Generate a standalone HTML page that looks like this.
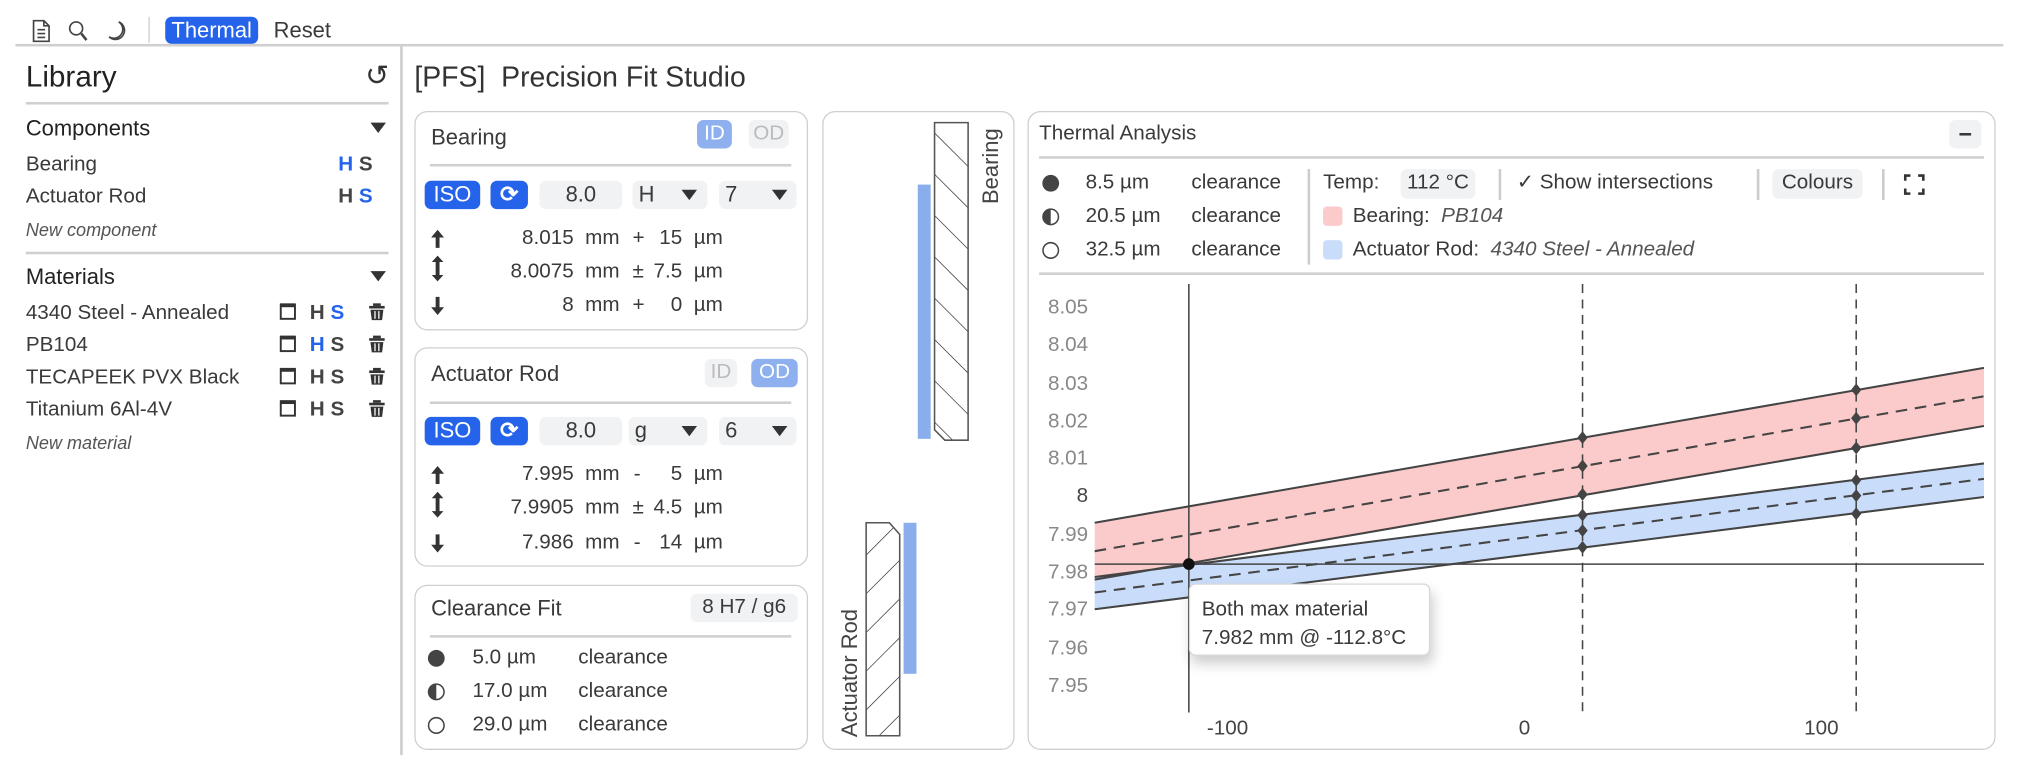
<!DOCTYPE html>
<html><head><meta charset="utf-8">
<style>
html,body{margin:0;padding:0;background:#fff;overflow:hidden;width:2024px;height:773px}
#r{position:absolute;left:0;top:0;width:1568px;height:599px;transform:scale(1.29082);transform-origin:0 0;font-family:"Liberation Sans",sans-serif;color:#3a3a3a;font-size:16px}
.a{position:absolute;white-space:nowrap;line-height:1}
.hr{position:absolute;height:2px;background:#d0d0d0}
.card{position:absolute;border:1.5px solid #cfcfcf;border-radius:10px;box-sizing:border-box}
.btn{position:absolute;border-radius:5px;background:#f1f2f4;text-align:center;line-height:22px;height:22px}
.blue{background:#2563eb;color:#fff}
.lb{background:#8fb0ee;color:#fff}
.b{font-weight:bold;color:#444}
.bb{font-weight:bold;color:#2563eb}
.r{text-align:right}
.it{font-style:italic;color:#555}
.tri{position:absolute;width:0;height:0;border-left:6px solid transparent;border-right:6px solid transparent;border-top:8px solid #333}
</style></head><body><div id="r">

<!-- toolbar -->
<svg class="a" style="left:24px;top:14px" width="80" height="20" viewBox="0 0 80 20" fill="none" stroke="#444" stroke-width="1.3">
<path d="M2 2h8l4 4v12H2z M10 2v4h4 M5 9h6 M5 12h6 M5 15h6"/>
<circle cx="35" cy="8" r="5"/><path d="M39 12l4 5" stroke-width="2"/>
<path d="M68 3a7 7 0 0 1-3 13.5a7 7 0 0 1-4.5-2a6 6 0 0 0 7.5-11.5z"/>
</svg>
<div class="a" style="left:115px;top:13px;width:1px;height:20px;background:#ccc"></div>
<div class="a blue" style="left:128px;top:13px;width:72px;height:21px;border-radius:5px;text-align:center;line-height:21px;font-size:17px">Thermal</div>
<div class="a" style="left:212px;top:15px;font-size:17px">Reset</div>
<div class="hr" style="left:12px;top:34px;width:1540px;height:1.5px"></div>
<div class="a" style="left:310px;top:36px;width:1.5px;height:549px;background:#ccc"></div>

<!-- sidebar -->
<div class="a" style="left:20px;top:48px;font-size:23px;color:#222">Library</div>
<div class="a" style="left:283px;top:48px;font-size:22px;color:#333">↺</div>
<div class="hr" style="left:20px;top:79px;width:281px"></div>
<div class="a" style="left:20px;top:91px;font-size:17px;color:#222">Components</div>
<div class="tri" style="left:287px;top:95px"></div>
<div class="a" style="left:20px;top:120px">Bearing</div>
<div class="a" style="left:262px;top:120px"><span class="bb">H</span> <span class="b">S</span></div>
<div class="a" style="left:20px;top:145px">Actuator Rod</div>
<div class="a" style="left:262px;top:145px"><span class="b">H</span> <span class="bb">S</span></div>
<div class="a it" style="left:20px;top:171px;font-size:14px">New component</div>
<div class="hr" style="left:20px;top:195px;width:281px"></div>
<div class="a" style="left:20px;top:206px;font-size:17px;color:#222">Materials</div>
<div class="tri" style="left:287px;top:210px"></div>

<div class="a" style="left:20px;top:235px">4340 Steel - Annealed</div>
<div class="a" style="left:20px;top:260px">PB104</div>
<div class="a" style="left:20px;top:285px">TECAPEEK PVX Black</div>
<div class="a" style="left:20px;top:310px">Titanium 6Al-4V</div>
<div class="a it" style="left:20px;top:336px;font-size:14px">New material</div>
<svg class="a" style="left:214px;top:232px" width="90" height="100" viewBox="0 0 90 100">
<g fill="none" stroke="#333" stroke-width="1.5">
<rect x="3.5" y="4" width="11" height="11"/><rect x="3.5" y="29" width="11" height="11"/><rect x="3.5" y="54" width="11" height="11"/><rect x="3.5" y="79" width="11" height="11"/></g>
<g fill="#333"><rect x="3" y="3" width="12" height="3"/><rect x="3" y="28" width="12" height="3"/><rect x="3" y="53" width="12" height="3"/><rect x="3" y="78" width="12" height="3"/>
<g id="t"><rect x="72" y="5" width="12" height="2"/><rect x="75" y="3" width="6" height="2"/><path d="M73 8h10l-1 8h-8z"/></g>
<use href="#t" y="25"/><use href="#t" y="50"/><use href="#t" y="75"/></g>
<g fill="#fff"><rect x="76" y="9" width="1" height="6"/><rect x="79" y="9" width="1" height="6"/><rect x="76" y="34" width="1" height="6"/><rect x="79" y="34" width="1" height="6"/><rect x="76" y="59" width="1" height="6"/><rect x="79" y="59" width="1" height="6"/><rect x="76" y="84" width="1" height="6"/><rect x="79" y="84" width="1" height="6"/></g>
</svg>
<div class="a" style="left:240px;top:235px"><span class="b">H</span> <span class="bb">S</span></div>
<div class="a" style="left:240px;top:260px"><span class="bb">H</span> <span class="b">S</span></div>
<div class="a" style="left:240px;top:285px"><span class="b">H</span> <span class="b">S</span></div>
<div class="a" style="left:240px;top:310px"><span class="b">H</span> <span class="b">S</span></div>

<!-- title -->
<div class="a" style="left:321px;top:49px;font-size:22px;color:#333">[PFS]&nbsp; Precision Fit Studio</div>

<!-- arrow icons -->
<svg class="a" style="left:330px;top:170px" width="20" height="270" viewBox="0 0 20 270" fill="#333">
<g id="up"><path d="M9 8l5 6h-3.5v8h-3v-8H4z"/></g>
<g id="ud"><path d="M9 28l4.5 5h-3v10h3L9 48l-4.5-5h3V33h-3z"/></g>
<g id="dn"><path d="M9 74l5-6h-3.5v-8h-3v8H4z"/></g>
<use href="#up" y="183"/><use href="#ud" y="183"/><use href="#dn" y="184"/>
</svg>

<!-- Bearing card -->
<div class="card" style="left:321px;top:86px;width:305px;height:170px"></div>
<div class="a" style="left:334px;top:98px;font-size:17px">Bearing</div>
<div class="btn lb" style="left:540px;top:93px;width:27px">ID</div>
<div class="btn" style="left:580px;top:93px;width:31px;color:#bbb">OD</div>
<div class="hr" style="left:333px;top:127px;width:280px"></div>
<div class="btn blue" style="left:329px;top:140px;width:43px;font-size:17px">ISO</div>
<div class="btn blue" style="left:380px;top:140px;width:29px;font-size:17px;font-weight:bold">⟳</div>
<div class="btn" style="left:418px;top:140px;width:64px;font-size:17px">8.0</div>
<div class="btn" style="left:490px;top:140px;width:58px;text-align:left;font-size:17px">&nbsp;H</div><div class="tri" style="left:528px;top:147px"></div>
<div class="btn" style="left:557px;top:140px;width:60px;text-align:left;font-size:17px">&nbsp;7</div><div class="tri" style="left:598px;top:147px"></div>
<div class="a r" style="left:360px;top:177px;width:120px">8.015&nbsp; mm</div>
<div class="a r" style="left:360px;top:203px;width:120px">8.0075&nbsp; mm</div>
<div class="a r" style="left:360px;top:229px;width:120px">8&nbsp; mm</div>
<div class="a" style="left:490px;top:177px">+</div><div class="a" style="left:490px;top:203px">±</div><div class="a" style="left:490px;top:229px">+</div>
<div class="a r" style="left:480px;top:177px;width:80px">15&nbsp; µm</div>
<div class="a r" style="left:480px;top:203px;width:80px">7.5&nbsp; µm</div>
<div class="a r" style="left:480px;top:229px;width:80px">0&nbsp; µm</div>

<!-- Actuator card -->
<div class="card" style="left:321px;top:269px;width:305px;height:170px"></div>
<div class="a" style="left:334px;top:281px;font-size:17px">Actuator Rod</div>
<div class="btn" style="left:546px;top:278px;width:25px;color:#bbb">ID</div>
<div class="btn lb" style="left:582px;top:278px;width:36px">OD</div>
<div class="hr" style="left:333px;top:311px;width:280px"></div>
<div class="btn blue" style="left:329px;top:323px;width:43px;font-size:17px">ISO</div>
<div class="btn blue" style="left:380px;top:323px;width:29px;font-size:17px;font-weight:bold">⟳</div>
<div class="btn" style="left:418px;top:323px;width:64px;font-size:17px">8.0</div>
<div class="btn" style="left:487px;top:323px;width:61px;text-align:left;font-size:17px">&nbsp;g</div><div class="tri" style="left:528px;top:330px"></div>
<div class="btn" style="left:557px;top:323px;width:60px;text-align:left;font-size:17px">&nbsp;6</div><div class="tri" style="left:598px;top:330px"></div>
<div class="a r" style="left:360px;top:360px;width:120px">7.995&nbsp; mm</div>
<div class="a r" style="left:360px;top:386px;width:120px">7.9905&nbsp; mm</div>
<div class="a r" style="left:360px;top:413px;width:120px">7.986&nbsp; mm</div>
<div class="a" style="left:491px;top:360px">-</div><div class="a" style="left:490px;top:386px">±</div><div class="a" style="left:491px;top:413px">-</div>
<div class="a r" style="left:480px;top:360px;width:80px">5&nbsp; µm</div>
<div class="a r" style="left:480px;top:386px;width:80px">4.5&nbsp; µm</div>
<div class="a r" style="left:480px;top:413px;width:80px">14&nbsp; µm</div>

<!-- Clearance card -->
<div class="card" style="left:321px;top:453px;width:305px;height:128px"></div>
<div class="a" style="left:334px;top:463px;font-size:17px">Clearance Fit</div>
<div class="btn" style="left:535px;top:460px;width:83px;font-size:16px">8 H7 / g6</div>
<div class="hr" style="left:333px;top:492px;width:280px"></div>
<svg class="a" style="left:330px;top:502px" width="16" height="70"><circle cx="8" cy="8" r="6.5" fill="#444"/><circle cx="8" cy="34" r="6" fill="none" stroke="#444" stroke-width="1.2"/><path d="M8 28a6 6 0 0 0 0 12z" fill="#444"/><circle cx="8" cy="60" r="6" fill="none" stroke="#444" stroke-width="1.2"/></svg>
<div class="a" style="left:366px;top:502px">5.0 µm</div><div class="a" style="left:448px;top:502px">clearance</div>
<div class="a" style="left:366px;top:528px">17.0 µm</div><div class="a" style="left:448px;top:528px">clearance</div>
<div class="a" style="left:366px;top:554px">29.0 µm</div><div class="a" style="left:448px;top:554px">clearance</div>

<!-- diagram card -->
<div class="card" style="left:637px;top:86px;width:149px;height:495px"></div>
<svg class="a" style="left:0;top:0" width="1568" height="599">
<defs><clipPath id="c1"><path d="M724 95H750V341H732L724 333Z"/></clipPath><clipPath id="c2"><path d="M671 570H697V414L689 405H671Z"/></clipPath></defs>
<rect x="711" y="143" width="10" height="197" fill="#8aaeec"/>
<g clip-path="url(#c1)" stroke="#444" stroke-width="0.6"><path d="M724 103l26 26M724 135l26 26M724 167l26 26M724 199l26 26M724 231l26 26M724 263l26 26M724 295l26 26M724 327l26 26"/></g>
<path d="M724 95H750V341H732L724 333Z" fill="none" stroke="#555" stroke-width="1.2"/>
<rect x="700" y="405" width="10" height="117" fill="#8aaeec"/>
<g clip-path="url(#c2)" stroke="#444" stroke-width="0.6"><path d="M671 430l26-26M671 460l26-26M671 490l26-26M671 520l26-26M671 550l26-26M671 580l26-26"/></g>
<path d="M671 570H697V414L689 405H671Z" fill="none" stroke="#555" stroke-width="1.2"/>
<text x="773" y="158" transform="rotate(-90 773 158)" font-family="Liberation Sans" font-size="17" fill="#444">Bearing</text>
<text x="664" y="571" transform="rotate(-90 664 571)" font-family="Liberation Sans" font-size="17" fill="#444">Actuator Rod</text>

<!-- chart -->
<clipPath id="pc"><rect x="848" y="220" width="689" height="340"/></clipPath>
<g clip-path="url(#pc)">
<path d="M848 405L1537 285L1537 330L848 449Z" fill="#fbcaca"/>
<path d="M848 447L1537 359L1537 385L848 472Z" fill="#c9ddfb"/>
<g stroke="#444" stroke-width="1.6" fill="none">
<path d="M848 405L1537 285M848 449L1537 330M848 447L1537 359M848 472L1537 385"/>
<path d="M848 427L1537 307M848 459L1537 371" stroke-dasharray="9 6"/>
<path d="M848 437H1537M921 220V552" stroke-width="1.2"/>
<path d="M1226 220V552M1438 220V552" stroke-width="1.2" stroke-dasharray="7 5"/>
</g>
<g fill="#444"><path id="d" d="M1226 334l4 5-4 5-4-5z"/>
<use href="#d" y="22"/><use href="#d" y="44"/><use href="#d" y="60"/><use href="#d" y="72"/><use href="#d" y="85"/>
<use href="#d" x="212" y="-37"/><use href="#d" x="212" y="-15"/><use href="#d" x="212" y="8"/><use href="#d" x="212" y="33"/><use href="#d" x="212" y="45"/><use href="#d" x="212" y="59"/>
<circle cx="921" cy="437" r="4.5" fill="#111"/></g>
</g>
<g font-family="Liberation Sans" font-size="16" fill="#888" text-anchor="end">
<text x="843" y="243">8.05</text><text x="843" y="272">8.04</text><text x="843" y="302">8.03</text><text x="843" y="331">8.02</text><text x="843" y="360">8.01</text><text x="843" y="389" fill="#444">8</text><text x="843" y="419">7.99</text><text x="843" y="448">7.98</text><text x="843" y="477">7.97</text><text x="843" y="507">7.96</text><text x="843" y="536">7.95</text>
</g>
<g font-family="Liberation Sans" font-size="16" fill="#444" text-anchor="middle"><text x="951" y="569">-100</text><text x="1181" y="569">0</text><text x="1411" y="569">100</text></g>
</svg>

<!-- thermal card -->
<div class="card" style="left:796px;top:86px;width:750px;height:495px"></div>
<div class="a" style="left:805px;top:96px">Thermal Analysis</div>
<div class="btn" style="left:1510px;top:93px;width:25px;font-weight:bold;font-size:18px">−</div>
<div class="hr" style="left:805px;top:121px;width:732px"></div>
<svg class="a" style="left:806px;top:134px" width="16" height="70"><circle cx="8" cy="8" r="6.5" fill="#444"/><circle cx="8" cy="34" r="6" fill="none" stroke="#444" stroke-width="1.2"/><path d="M8 28a6 6 0 0 0 0 12z" fill="#444"/><circle cx="8" cy="60" r="6" fill="none" stroke="#444" stroke-width="1.2"/></svg>
<div class="a" style="left:841px;top:134px">8.5 µm</div><div class="a" style="left:923px;top:134px">clearance</div>
<div class="a" style="left:841px;top:160px">20.5 µm</div><div class="a" style="left:923px;top:160px">clearance</div>
<div class="a" style="left:841px;top:186px">32.5 µm</div><div class="a" style="left:923px;top:186px">clearance</div>
<div class="a" style="left:1013px;top:131px;width:1.5px;height:74px;background:#ccc"></div>
<div class="a" style="left:1025px;top:134px">Temp:</div>
<div class="btn" style="left:1085px;top:131px;width:58px;height:23px;font-size:16px">112 °C</div>
<div class="a" style="left:1161px;top:131px;width:1.5px;height:24px;background:#ccc"></div>
<div class="a" style="left:1175px;top:134px">✓ Show intersections</div>
<div class="a" style="left:1361px;top:131px;width:1.5px;height:24px;background:#ccc"></div>
<div class="btn" style="left:1373px;top:131px;width:70px;height:23px;font-size:16px">Colours</div>
<div class="a" style="left:1458px;top:131px;width:1.5px;height:24px;background:#ccc"></div>
<svg class="a" style="left:1474px;top:134px" width="18" height="18" fill="none" stroke="#333" stroke-width="2"><path d="M2 6V2h4M12 2h4v4M16 12v4h-4M6 16H2v-4"/></svg>
<div class="a" style="left:1025px;top:160px;width:15px;height:15px;border-radius:3px;background:#fbcaca"></div>
<div class="a" style="left:1048px;top:160px">Bearing:&nbsp; <span class="it">PB104</span></div>
<div class="a" style="left:1025px;top:186px;width:15px;height:15px;border-radius:3px;background:#c9ddfb"></div>
<div class="a" style="left:1048px;top:186px">Actuator Rod:&nbsp; <span class="it">4340 Steel - Annealed</span></div>
<div class="hr" style="left:805px;top:211px;width:732px"></div>

<div class="a" style="left:921px;top:452px;width:187px;height:56px;background:#fff;border:1px solid #d8d8d8;border-radius:5px;box-shadow:2px 6px 10px rgba(0,0,0,.2);box-sizing:border-box;padding:9px 0 0 9px;line-height:22px;font-size:16px">Both max material<br>7.982 mm @ -112.8°C</div>

</div></body></html>
